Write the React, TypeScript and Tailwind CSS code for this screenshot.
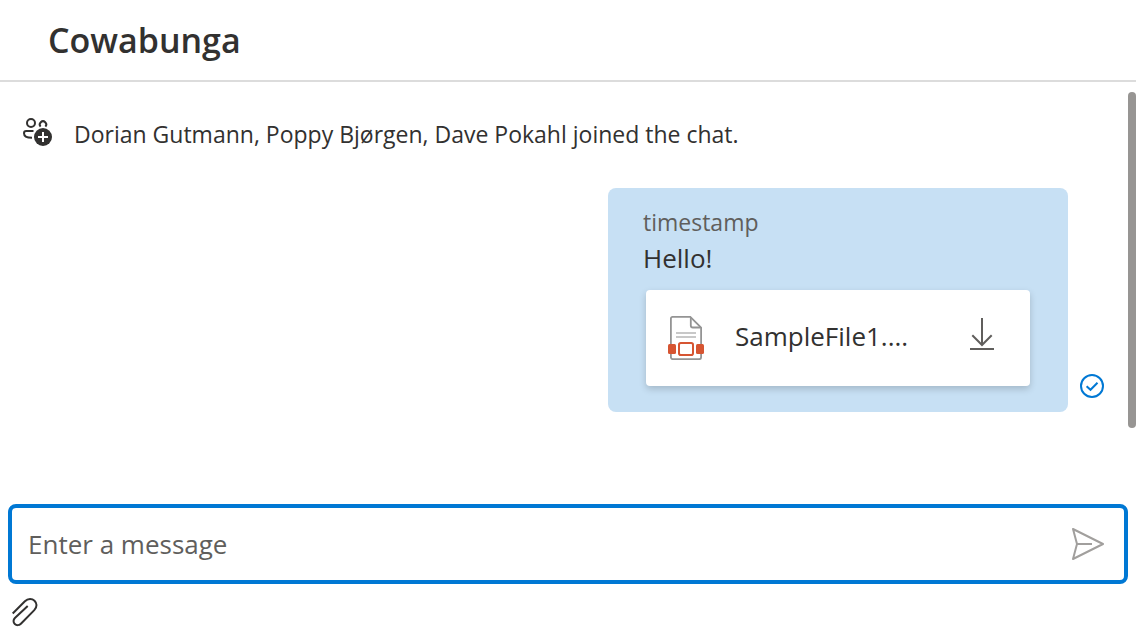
import { useState } from "react";

function PeopleAddIcon() {
  return (
    <svg width="32" height="32" viewBox="0 0 32 32" fill="none" stroke="#323130" strokeWidth="2" aria-hidden="true">
      <circle cx="9" cy="7" r="4" />
      <path d="M18.6 10.6A3.2 3.2 0 1 1 23.4 10.6" />
      <path d="M11.5 15H4.2a2.2 2.2 0 0 0-2.2 2.2c0 2.6 2.6 4.6 8 4.6" />
      <circle cx="21" cy="21" r="9" fill="#323130" stroke="none" />
      <path d="M21 16v10M16 21h10" stroke="#fff" />
    </svg>
  );
}

function PresentationFileIcon() {
  return (
    <svg width="36" height="44" viewBox="0 0 36 44" fill="none" className="shrink-0" aria-hidden="true">
      <path d="M4.5.9h17.8L33.1 11.7V41.2a2 2 0 0 1-2 2H4.9a2 2 0 0 1-2-2V2.5A1.6 1.6 0 0 1 4.5.9Z" fill="#fff" stroke="#949494" strokeWidth="1.8" />
      <path d="M22.8 1.2v8.3a2 2 0 0 0 2 2h8" stroke="#949494" strokeWidth="1.8" />
      <path d="M8 17h20M8 21h20" stroke="#c8c8c8" strokeWidth="1.8" />
      <path d="M8 26h20v14H8z" fill="#fff" />
      <rect x="0" y="28" width="8" height="10" rx="1.5" fill="#d65532" />
      <rect x="28" y="28" width="8" height="10" rx="1.5" fill="#d65532" />
      <rect x="11" y="27" width="14" height="12" rx="1.8" fill="#fff" stroke="#d65532" strokeWidth="2" />
    </svg>
  );
}

function DownloadIcon() {
  return (
    <svg width="24" height="32" viewBox="0 0 24 32" fill="none" stroke="#605e5c" strokeWidth="2" aria-hidden="true">
      <path d="M12 0v26.5M2.3 17.3L12 27l9.7-9.7M0 31h24" />
    </svg>
  );
}

function SentIcon() {
  return (
    <svg width="24" height="24" viewBox="0 0 24 24" fill="none" stroke="#0078d4" strokeWidth="2" role="img" aria-label="Sent" className="shrink-0">
      <circle cx="12" cy="12" r="11" />
      <path d="M6.6 12.2l3.9 3.6 7-7" />
    </svg>
  );
}

function SendIcon() {
  return (
    <svg width="32" height="32" viewBox="0 0 32 32" fill="none" stroke="#a19f9d" strokeWidth="2" strokeLinejoin="round" aria-hidden="true">
      <path d="M1 1l30 15L1 31l4-15zM5 16h15" />
    </svg>
  );
}

function PaperclipIcon() {
  return (
    <svg width="28" height="32" viewBox="0 0 28 32" fill="none" stroke="#323130" strokeWidth="2" aria-hidden="true">
      <path d="M2.7 17.5L14.9 5.3c3.2-3.3 7.3-2.8 9.6-.6 2.5 2.4 2.9 6.200-.2 9.400L10.900 27.700c-1.900 1.900-4.500 1.800-6.100.3-1.700-1.600-1.700-4.100.1-6L17.700 10" />
    </svg>
  );
}

export default function App() {
  const [message, setMessage] = useState("");

  return (
    <div className="flex h-screen flex-col bg-white font-['Open_Sans','Noto_Sans',sans-serif] text-[#323130]">
      <header className="border-b-2 border-[#dcdcdc] px-12 py-5">
        <h1 className="text-[34px] leading-10 font-semibold">Cowabunga</h1>
      </header>

      <main className="flex min-h-0 flex-1">
        <div className="min-w-0 flex-1 overflow-hidden pt-8">
          <div className="flex items-center gap-5 px-[22px]">
            <div className="shrink-0 pb-1">
              <PeopleAddIcon />
            </div>
            <p className="text-[23px] leading-10">Dorian Gutmann, Poppy Bjørgen, Dave Pokahl joined the chat.</p>
          </div>

          <div className="mt-[34px] flex items-end justify-end gap-3 pr-6">
            <article className="w-[460px] rounded-lg bg-[#c7e0f4] pt-4 pr-[38px] pb-[26px] pl-[35px]">
              <p className="text-[23px] leading-9 text-[#605e5c]">timestamp</p>
              <p className="text-[26px] leading-9">Hello!</p>
              <div className="mt-[14px] ml-[3px] flex h-24 items-center rounded bg-white pr-9 pl-[22px] shadow-[0_3px_7px_rgba(0,0,0,0.18)]">
                <PresentationFileIcon />
                <span className="ml-[31px] flex-1 pb-1 text-[26px] leading-9">SampleFile1....</span>
                <button type="button" aria-label="Download SampleFile1" className="pb-2">
                  <DownloadIcon />
                </button>
              </div>
            </article>
            <div className="pb-[14px]">
              <SentIcon />
            </div>
          </div>
        </div>
        <div className="w-2 shrink-0 pt-[10px]" aria-hidden="true">
          <div className="h-[336px] rounded-full bg-[#979593]" />
        </div>
      </main>

      <form className="px-2 pb-3" onSubmit={(event) => event.preventDefault()}>
        <div className="flex h-20 items-center rounded-lg border-4 border-[#0078d4] pr-5 pl-4">
          <input
            type="text"
            aria-label="Enter a message"
            placeholder="Enter a message"
            value={message}
            onChange={(event) => setMessage(event.target.value)}
            className="min-w-0 flex-1 bg-transparent text-[26px] leading-10 outline-none placeholder:text-[#605e5c]"
          />
          <button type="submit" aria-label="Send message">
            <SendIcon />
          </button>
        </div>
        <button type="button" aria-label="Attach file" className="mt-3 ml-[2px] block">
          <PaperclipIcon />
        </button>
      </form>
    </div>
  );
}
